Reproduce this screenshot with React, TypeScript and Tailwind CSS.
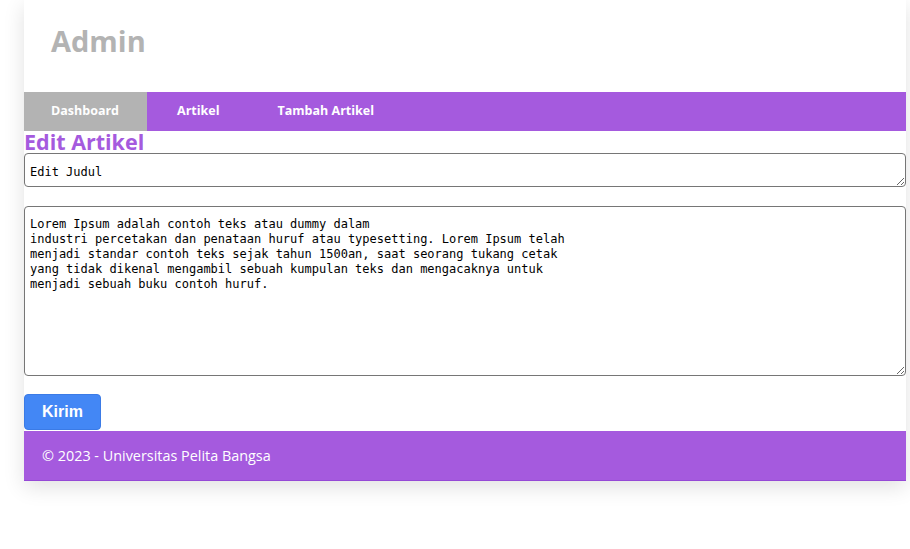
import * as React from 'react';

const lorem = `Lorem Ipsum adalah contoh teks atau dummy dalam
industri percetakan dan penataan huruf atau typesetting. Lorem Ipsum telah
menjadi standar contoh teks sejak tahun 1500an, saat seorang tukang cetak
yang tidak dikenal mengambil sebuah kumpulan teks dan mengacaknya untuk
menjadi sebuah buku contoh huruf.`;

function App() {
  return (
    <div className="min-h-screen bg-white" style={{ fontFamily: '"Open Sans", sans-serif' }}>
      <div className="ml-[24px] w-[882px] bg-white shadow-[0_6px_20px_rgba(0,0,0,0.12)]">
        <header className="h-[92px] flex items-center px-[27px]">
          <h1 className="text-[29px] font-bold text-[#b3b3b3] leading-none -mt-[12px]">Admin</h1>
        </header>
        <nav className="h-[39px] flex bg-[#a55ade] text-white text-[12.5px] font-bold">
          <a className="flex items-center pl-[27px] pr-[28px] bg-[#b3b3b3]">Dashboard</a>
          <a className="flex items-center px-[30px]">Artikel</a>
          <a className="flex items-center px-[28px]">Tambah Artikel</a>
        </nav>
        <h2 className="text-[21.5px] leading-[22px] font-bold text-[#a55ade]">Edit Artikel</h2>
        <form className="flex flex-col">
          <textarea
            defaultValue="Edit Judul"
            className="block w-full h-[34px] px-[5px] pt-[11px] pb-[2px] border border-[#767676] rounded-[4px] text-[12px] leading-[15px] text-black"
            style={{ fontFamily: '"DejaVu Sans Mono", monospace' }}
          />
          <textarea
            defaultValue={lorem}
            className="block w-full h-[170px] mt-[19px] px-[5px] pt-[10px] pb-[2px] border border-[#767676] rounded-[4px] text-[12px] leading-[15px] text-black"
            style={{ fontFamily: '"DejaVu Sans Mono", monospace' }}
          />
          <button
            type="button"
            className="block mt-[18px] h-[36px] w-[77px] bg-[#4387f5] text-white text-[16px] font-bold rounded-[4px] border border-[#3b7be6]"
            style={{ fontFamily: '"Liberation Sans", Arial, sans-serif' }}
          >
            Kirim
          </button>
        </form>
        <footer className="h-[50px] mt-[1px] flex items-center px-[18px] bg-[#a55ade] border-b border-[#9549d6] text-white text-[14.4px]">
          © 2023 - Universitas Pelita Bangsa
        </footer>
      </div>
    </div>
  );
}

export default App;
